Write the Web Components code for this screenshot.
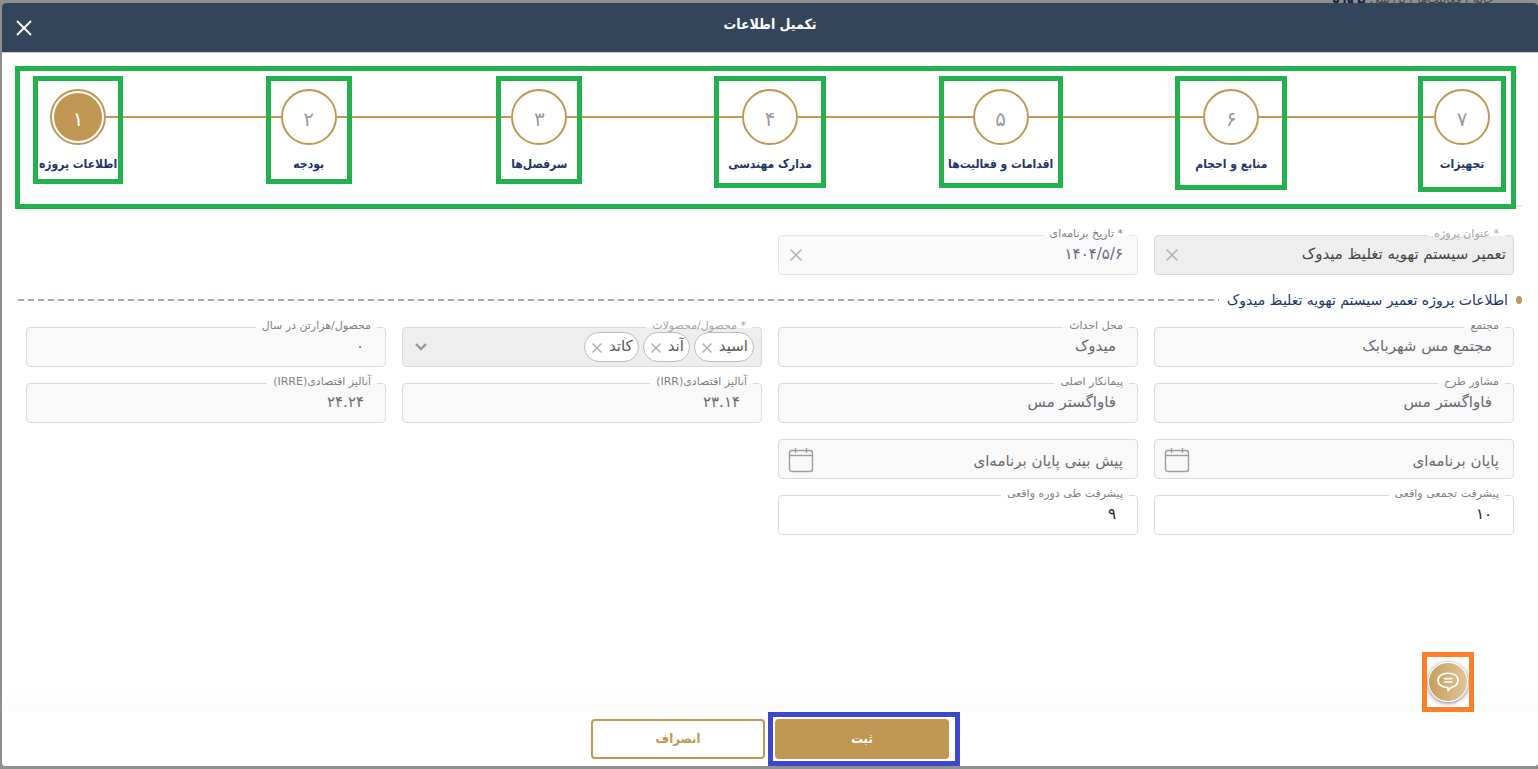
<!DOCTYPE html>
<html lang="fa" dir="rtl">
<head>
<meta charset="utf-8">
<meta name="viewport" content="width=device-width, initial-scale=1">
<title>تکمیل اطلاعات</title>
<style>
  :root {
    --gold: #c09753;
    --navy: #33455a;
    --ink: #1d3568;
    --line: #d9dadd;
    --green: #23b14d;
    --heading-font: "DejaVu Sans Condensed", "DejaVu Sans", sans-serif;
  }
  body {
    margin: 0;
    background: #8f8f8f;
    font-family: "DejaVu Sans", sans-serif;
    font-size: 15px;
    line-height: 20px;
  }
</style>
</head>
<body>
<project-dialog></project-dialog>

<script>
const define = (name, html, setup) => {
  const template = document.createElement('template');
  template.innerHTML = html;
  customElements.define(name, class extends HTMLElement {
    constructor() {
      super();
      this.attachShadow({ mode: 'open' }).append(template.content.cloneNode(true));
    }
    connectedCallback() {
      if (setup) setup(this, this.shadowRoot);
    }
  });
};

/* Coloured rectangle that highlights a region of the screen. */
define('mark-frame', `
  <style>
    :host { display: block; position: absolute; box-sizing: border-box; border: 5px solid var(--mark-color, var(--green)); pointer-events: none; }
  </style>`);

define('wizard-step', `
  <style>
    :host { display: flex; flex-direction: column; align-items: center; position: relative; width: 56px; flex: none; gap: 9px; }
    .circle {
      box-sizing: border-box; width: 56px; height: 56px; padding: 2px; border: 2px solid var(--gold); border-radius: 50%;
      background: #fff; font: inherit; font-size: 20px; line-height: 24px; color: #9b9b9b; cursor: pointer;
    }
    .circle span { box-sizing: border-box; display: flex; align-items: center; justify-content: center; height: 100%; padding-top: 4px; border-radius: 50%; }
    :host([current]) .circle { color: #fff; }
    :host([current]) .circle span { background: var(--gold); }
    .label { white-space: nowrap; font-family: var(--heading-font); font-weight: bold; font-size: 12px; line-height: 20px; color: var(--ink); }
    mark-frame { top: -13px; left: 50%; transform: translateX(-50%); width: var(--mark-width); height: var(--mark-height); }
  </style>
  <button class="circle" type="button" aria-labelledby="label"><span></span></button>
  <div class="label" id="label"><slot></slot></div>
  <mark-frame></mark-frame>`,
  (host, root) => {
    root.querySelector('.circle span').textContent = host.getAttribute('number');
    if (host.hasAttribute('current')) root.querySelector('.circle').setAttribute('aria-current', 'step');
  });

define('wizard-steps', `
  <style>
    :host { display: block; position: relative; border-bottom: 2px solid #e9e9ee; padding: 19px 32px 31px; direction: ltr; }
    .row { display: flex; }
    ::slotted(i) { flex: 1; height: 2px; margin-top: 27px; background: var(--gold); }
    mark-frame { inset: -4px 6px -4px -3px; }
  </style>
  <div class="row"><slot></slot></div>
  <mark-frame></mark-frame>`);

/* Outlined field whose label interrupts the top border. */
define('outlined-field', `
  <style>
    :host { display: block; position: relative; min-width: 0; --fill: #f9f9f9; --text: #666a72; --start: 22px; --label-color: #7f7f82; }
    :host([tone="locked"]) { --fill: #eee; --text: #444; --start: 8px; --label-color: #a5a5a8; }
    :host([tone="date"]) { --fill: #fafafa; --text: #606b7b; --start: 15px; --line: #e3e4e7; }
    :host([tone="open"]) { --fill: #fff; --text: #1c1c22; }
    :host([tone="calendar"]) { --start: 15px; }
    .box {
      box-sizing: border-box; display: flex; align-items: center; height: 40px; padding: 0 9px 2px;
      border: 1px solid var(--line); border-radius: 4px; background: var(--fill); padding-inline-start: calc(var(--start) - 1px);
    }
    :host([tone="calendar"]) .box { padding-bottom: 0; padding-top: 4px; }
    input { flex: 1; min-width: 0; width: 100%; height: 24px; border: 0; padding: 0; background: none; font: inherit; line-height: 24px; color: var(--text); outline: 0; }
    input::placeholder { color: #6a6a6a; opacity: 1; }
    label {
      position: absolute; top: -9px; right: 9px; padding: 0 6px; font-size: 11px; line-height: 16px; white-space: nowrap; color: var(--label-color);
      background: linear-gradient(#fff 10px, var(--fill) 10px);
    }
    button { display: flex; flex: none; border: 0; padding: 0; background: none; color: #b3b3b3; cursor: pointer; }
    button:not(.shown) { display: none; }
    .clear { padding-top: 2px; }
    .calendar { margin-top: -2px; color: #9e9e9e; }
  </style>
  <div class="box">
    <input id="field" type="text">
    <button class="clear" type="button" aria-label="×"><svg width="16" height="16" viewBox="0 0 16 16" fill="none" stroke="currentColor" stroke-width="1.6"><path d="M2.500 2.500l11 11M13.500 2.500l-11 11"/></svg></button>
    <button class="calendar" type="button" aria-label="تقویم"><svg width="26" height="26" viewBox="0 0 26 26" fill="none" stroke="currentColor" stroke-width="1.4"><rect x="1.5" y="3.5" width="23" height="21" rx="2.500"/><path d="M1.500 8.500h23M7.500 1v5M18.500 1v5"/></svg></button>
  </div>
  <label for="field"></label>`,
  (host, root) => {
    const input = root.querySelector('input');
    const tone = host.getAttribute('tone');
    const label = host.getAttribute('label');
    if (tone === 'calendar') {
      input.placeholder = label;
      input.setAttribute('aria-label', label);
      root.querySelector('label').remove();
    } else {
      input.value = host.getAttribute('value');
      root.querySelector('label').textContent = label;
    }
    input.readOnly = tone !== 'open';
    if (host.hasAttribute('clearable')) root.querySelector('.clear').classList.add('shown');
    if (tone === 'calendar') root.querySelector('.calendar').classList.add('shown');
  });

define('tag-chip', `
  <style>
    :host { box-sizing: border-box; display: flex; align-items: center; gap: 6px; height: 30px; padding: 0 5px 2px 6px; border: 1px solid #bdbdbd; border-radius: 15px; background: #fff; color: #555; white-space: nowrap; }
    button { display: flex; border: 0; padding: 0; margin-top: 4px; background: none; color: #b0b0b0; cursor: pointer; }
  </style>
  <slot></slot>
  <button type="button" aria-label="×"><svg width="12" height="12" viewBox="0 0 12 12" fill="none" stroke="currentColor" stroke-width="1.5"><path d="M1.5 1.5l9 9M10.5 1.5l-9 9"/></svg></button>`);

define('tags-field', `
  <style>
    :host { display: block; position: relative; min-width: 0; }
    .box { box-sizing: border-box; display: flex; align-items: center; gap: 4px; height: 40px; padding: 0 7px 0 11px; border: 1px solid var(--line); border-radius: 4px; background: #eee; }
    .pick { position: relative; flex: 1; display: flex; align-items: center; justify-content: flex-end; min-width: 0; }
    select { appearance: none; width: 100%; height: 30px; border: 0; padding: 0; background: none; outline: 0; }
    svg { position: absolute; left: 0; pointer-events: none; }
    label { position: absolute; top: -9px; right: 10px; padding: 0 6px; font-size: 11px; line-height: 16px; white-space: nowrap; color: #a5a5a8; background: linear-gradient(#fff 10px, transparent 10px); }
  </style>
  <div class="box">
    <slot></slot>
    <div class="pick">
      <select id="pick"><option></option></select>
      <svg width="14" height="10" viewBox="0 0 14 10" fill="none" stroke="#999" stroke-width="2.4"><path d="M2 2l5 5 5-5"/></svg>
    </div>
  </div>
  <label for="pick"></label>`,
  (host, root) => { root.querySelector('label').textContent = host.getAttribute('label'); });

define('section-title', `
  <style>
    :host { display: flex; align-items: center; gap: 8px; }
    .dot { flex: none; width: 6px; height: 8px; border-radius: 50%; background: var(--gold); }
    h2 { margin: 0; font-size: 14px; font-weight: normal; line-height: 20px; color: var(--ink); }
    .rule { flex: 1; height: 2px; background: repeating-linear-gradient(to right, #a5a9bd 0 6px, transparent 6px 10px); }
  </style>
  <span class="dot"></span><h2><slot></slot></h2><span class="rule"></span>`);

define('action-button', `
  <style>
    :host { display: block; position: relative; width: 174px; }
    button { box-sizing: border-box; width: 100%; height: 40px; border: 2px solid var(--gold); border-radius: 4px; padding: 0; background: #fff; font: bold 13px/20px var(--heading-font); color: var(--gold); cursor: pointer; }
    :host([primary]) button { background: var(--gold); color: #fff; }
    mark-frame { display: none; --mark-color: #3f48cc; inset: -7px -11px -7px -7px; }
    :host([primary]) mark-frame { display: block; }
  </style>
  <button type="button"><slot></slot></button>
  <mark-frame></mark-frame>`);

define('chat-button', `
  <style>
    :host { display: flex; align-items: center; justify-content: center; width: 52px; height: 60px; position: relative; background: #fff; }
    button { display: flex; align-items: center; justify-content: center; box-sizing: border-box; width: 40px; height: 40px; border: 1px solid #fff; border-radius: 50%; padding: 0; background: linear-gradient(to right, #c69f5f, #e0c597); box-shadow: 0 1px 4px #0008; cursor: pointer; }
    mark-frame { --mark-color: #ff7f27; inset: 0; }
  </style>
  <button type="button" aria-label="گفتگو"><svg width="24" height="24" viewBox="0 0 24 24" fill="none" stroke="#fff" stroke-width="1.600" stroke-linejoin="round" stroke-linecap="round"><path d="M12 3.200c5.900 0 10 2.600 10 7 0 4.200-3.600 6.400-6.600 7.100L12 20.800v-3.300C6 17.500 2 14.600 2 10.200c0-4.400 4.100-7 10-7z"/><path d="M8.300 8.600h7.600M8.300 12h7.600"/></svg></button>
  <mark-frame></mark-frame>`);

define('project-dialog', `
  <style>
    :host { display: flex; flex-direction: column; box-sizing: border-box; min-height: 100vh; padding: 0 0 3px 2px; }
    .crumbs { display: flex; align-items: flex-end; height: 3px; overflow: hidden; padding-inline-start: 44px; font-size: 12px; line-height: 8px; color: #444; white-space: pre; }
    .crumbs b { color: #16223d; }
    .dialog { flex: 1; display: flex; flex-direction: column; position: relative; overflow: hidden; border-radius: 4px; background: #fff; }
    header { display: flex; flex-direction: row-reverse; align-items: center; height: 50px; padding: 0 14px; background: var(--navy); border-bottom: 1px solid #c9c9cc; box-sizing: border-box; }
    h1 { flex: 1; margin: 0; padding-bottom: 8px; text-align: center; font-family: var(--heading-font); font-size: 14px; line-height: 20px; color: #fff; }
    .close { display: flex; border: 0; padding: 0; background: none; color: #fff; cursor: pointer; }
    .side { width: 16px; }
    main { flex: 1; padding: 17px 16px 16px; background: linear-gradient(#fff calc(100% - 24px), #fbfbfb); }
    .grid { display: grid; grid-template-columns: repeat(4, minmax(0, 1fr)); gap: 16px; padding: 0 8px; }
    .top { margin-top: 28px; }
    section-title { margin: 15px 0 17px; }
    .new-row { grid-column-start: 1; }
    footer { display: flex; justify-content: center; gap: 10px; padding: 8px 0 7px; background: #fff; }
    chat-button { position: absolute; right: 64px; bottom: 54px; }
  </style>
  <div class="crumbs">خانه / فعالیت‌ها / بررسی <b>پروژه</b></div>
  <div class="dialog" role="dialog" aria-labelledby="title">
    <header>
      <button class="close" type="button" aria-label="×"><svg width="16" height="16" viewBox="0 0 16 16" fill="none" stroke="currentColor" stroke-width="2"><path d="M1 1l14 14M15 1L1 15"/></svg></button>
      <h1 id="title">تکمیل اطلاعات</h1>
      <span class="side"></span>
    </header>
    <main>
      <wizard-steps>
        <wizard-step number="۱" current style="--mark-width:90px;--mark-height:108px">اطلاعات پروژه</wizard-step><i></i>
        <wizard-step number="۲" style="--mark-width:86px;--mark-height:108px">بودجه</wizard-step><i></i>
        <wizard-step number="۳" style="--mark-width:86px;--mark-height:108px">سرفصل‌ها</wizard-step><i></i>
        <wizard-step number="۴" style="--mark-width:112px;--mark-height:112px">مدارک مهندسی</wizard-step><i></i>
        <wizard-step number="۵" style="--mark-width:124px;--mark-height:112px">اقدامات و فعالیت‌ها</wizard-step><i></i>
        <wizard-step number="۶" style="--mark-width:112px;--mark-height:114px">منابع و احجام</wizard-step><i></i>
        <wizard-step number="۷" style="--mark-width:88px;--mark-height:116px">تجهیزات</wizard-step>
      </wizard-steps>
      <div class="grid top">
        <outlined-field tone="locked" clearable label="* عنوان پروژه" value="تعمیر سیستم تهویه تغلیظ میدوک"></outlined-field>
        <outlined-field tone="date" clearable label="* تاریخ برنامه‌ای" value="۱۴۰۴/۵/۶"></outlined-field>
      </div>
      <section-title>اطلاعات پروژه تعمیر سیستم تهویه تغلیظ میدوک</section-title>
      <div class="grid">
        <outlined-field label="مجتمع" value="مجتمع مس شهربابک"></outlined-field>
        <outlined-field label="محل احداث" value="میدوک"></outlined-field>
        <tags-field label="* محصول/محصولات"><tag-chip>اسید</tag-chip><tag-chip>آند</tag-chip><tag-chip>کاتد</tag-chip></tags-field>
        <outlined-field label="محصول/هزارتن در سال" value="۰"></outlined-field>
        <outlined-field label="مشاور طرح" value="فاواگستر مس"></outlined-field>
        <outlined-field label="پیمانکار اصلی" value="فاواگستر مس"></outlined-field>
        <outlined-field label="آنالیز اقتصادی(IRR)" value="۲۳.۱۴"></outlined-field>
        <outlined-field label="آنالیز اقتصادی(IRRE)" value="۲۴.۲۴"></outlined-field>
        <outlined-field tone="calendar" label="پایان برنامه‌ای"></outlined-field>
        <outlined-field tone="calendar" label="پیش بینی پایان برنامه‌ای"></outlined-field>
        <outlined-field class="new-row" tone="open" label="پیشرفت تجمعی واقعی" value="۱۰"></outlined-field>
        <outlined-field tone="open" label="پیشرفت طی دوره واقعی" value="۹"></outlined-field>
      </div>
    </main>
    <footer>
      <action-button primary>ثبت</action-button>
      <action-button>انصراف</action-button>
    </footer>
    <chat-button></chat-button>
  </div>`);
</script>
</body>
</html>
